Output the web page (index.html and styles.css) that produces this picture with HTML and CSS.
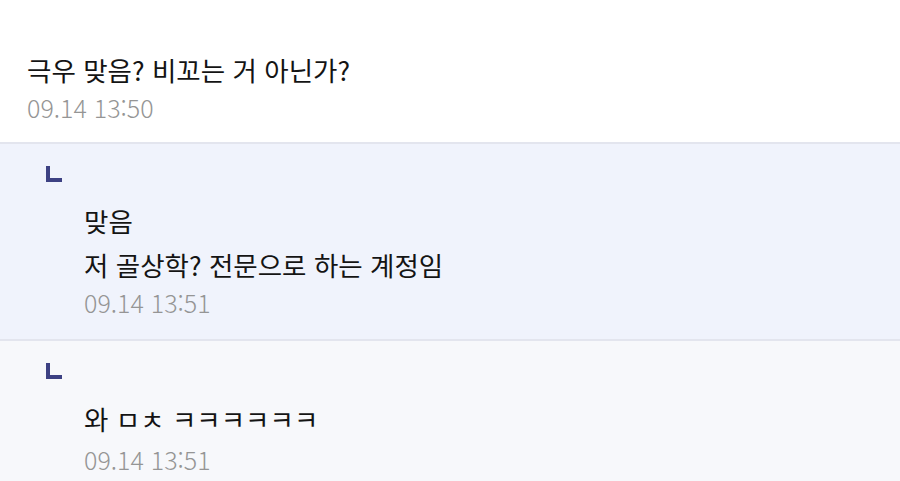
FILE: index.html
```html
<!DOCTYPE html>
<html lang="ko">
<head>
<meta charset="utf-8">
<link rel="stylesheet" href="styles.css">
</head>
<body>
<div class="thread">
  <div class="comment">
    <p class="text">극우 맞음? 비꼬는 거 아닌가?</p>
    <p class="time">09.14 13:50</p>
  </div>
  <div class="reply reply-active">
    <span class="reply-icon"></span>
    <div class="reply-body">
      <p class="text">맞음</p>
      <p class="text">저 골상학? 전문으로 하는 계정임</p>
      <p class="time">09.14 13:51</p>
    </div>
  </div>
  <div class="reply reply-plain">
    <span class="reply-icon"></span>
    <div class="reply-body">
      <p class="text">와 ㅁㅊ ㅋㅋㅋㅋㅋㅋ</p>
      <p class="time">09.14 13:51</p>
    </div>
  </div>
</div>
</body>
</html>
```
FILE: styles.css
```css
html, body {
  margin: 0;
  padding: 0;
  background: #ffffff;
}
body {
  font-family: "Noto Sans CJK KR", "Noto Sans", sans-serif;
  color: #111111;
}
p {
  margin: 0;
}
.thread {
  display: flex;
  flex-direction: column;
}
.text {
  font-size: 26.5px;
  line-height: 44px;
  color: #141414;
}
.time {
  font-size: 25px;
  line-height: 30px;
  font-weight: 300;
  color: #959595;
}
.comment {
  padding: 48px 27px 20px 27px;
  border-bottom: 2px solid #e3e5ee;
}
.reply {
  display: flex;
  flex-direction: column;
  padding: 22px 27px 22px 46px;
}
.reply-active {
  background: #f0f3fc;
  border-bottom: 2px solid #e3e5ee;
}
.reply-plain {
  background: #f7f8fb;
  padding-bottom: 8px;
}
.reply-plain .reply-body {
  margin-top: 18px;
}
.reply-plain .time {
  margin-top: 3px;
}
.reply-icon {
  display: block;
  width: 12px;
  height: 12px;
  border-left: 4px solid #3d4183;
  border-bottom: 4px solid #3d4183;
}
.reply-body {
  padding-left: 38px;
  margin-top: 17px;
}
```
